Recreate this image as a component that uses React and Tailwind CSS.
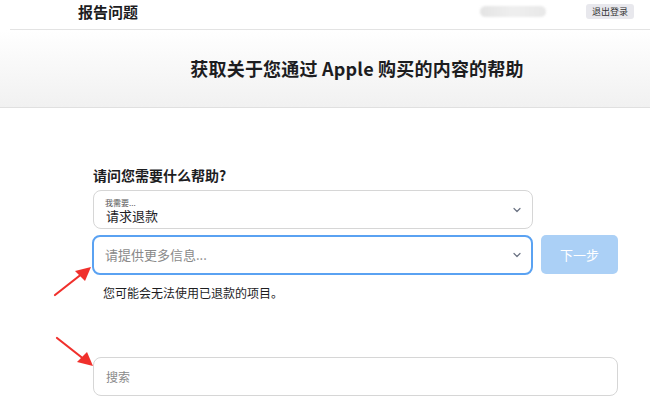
import React from "react";

function Chevron() {
  return (
    <svg className="w-[10px] h-[10px] text-gray-500" viewBox="0 0 10 10" fill="none" stroke="currentColor">
      <path d="M2 3.5 L5 6.5 L8 3.5" strokeWidth="1.2" strokeLinecap="round" strokeLinejoin="round" />
    </svg>
  );
}

export default function App() {
  return (
    <div
      className="relative w-[650px] h-[406px] overflow-hidden bg-white text-[#1d1d1f]"
      style={{ fontFamily: '"Noto Sans CJK SC", "Liberation Sans", sans-serif' }}
    >
      {/* Top bar */}
      <header className="ml-[10px] h-[30px] border-b border-[#e3e3e3] flex items-center pb-[7px] pl-[68px] pr-[16px]">
        <h1 className="text-[15px] font-bold leading-none">报告问题</h1>
        <div className="ml-auto flex items-center gap-[40px]">
          <div className="w-[66px] h-[11px] rounded-full bg-gradient-to-r from-[#e4e4e4] via-[#efefef] to-[#e8e8e8] blur-[1px]" />
          <button className="h-[15px] px-[6px] rounded-[3px] bg-[#e8e8ed] text-[9px] leading-none text-[#333]">退出登录</button>
        </div>
      </header>

      {/* Hero */}
      <section className="h-[78px] bg-gradient-to-b from-white to-[#f1f1f1] border-b border-[#e0e0e0] flex items-center justify-center">
        <h2 className="ml-[64px] text-[18px] font-bold tracking-[0.2px]">获取关于您通过 Apple 购买的内容的帮助</h2>
      </section>

      {/* Form */}
      <main className="pl-[93px] pr-[32px] pt-[60px]">
        <h3 className="text-[14px] font-bold leading-none mb-[8px]">请问您需要什么帮助?</h3>

        <div className="w-[440px] h-[39px] rounded-[8px] border border-[#d6d6d6] flex items-center pl-[11px] pr-[10px]">
          <div className="flex-1 flex flex-col pt-[2px]">
            <span className="text-[8px] leading-[9px] text-[#555]">我需要...</span>
            <span className="text-[13px] leading-[15px] mt-[1px] ml-[1px]">请求退款</span>
          </div>
          <Chevron />
        </div>

        <div className="mt-[6px] flex gap-[8px]">
          <div className="w-[441px] h-[40px] -ml-[1px] rounded-[8px] border-[2.5px] border-[#5aa2f2] flex items-center pl-[11px] pr-[9px]">
            <span className="flex-1 text-[13px] text-[#8a8a8a]">请提供更多信息...</span>
            <Chevron />
          </div>
          <button className="w-[77px] h-[39px] rounded-[5px] bg-[#abd0f6] text-white text-[13px]">下一步</button>
        </div>

        <p className="mt-[12px] ml-[10px] text-[12px] leading-none">您可能会无法使用已退款的项目。</p>

        <div className="mt-[58px] h-[39px] rounded-[8px] border border-[#d6d6d6] flex items-center pl-[12px]">
          <span className="text-[12px] text-[#8a8a8a]">搜索</span>
        </div>
      </main>

      {/* Annotation arrows */}
      <svg className="absolute left-[53px] top-[265px] w-[40px] h-[32px]" viewBox="0 0 40 32" fill="none">
        <line x1="2" y1="30" x2="30" y2="8" stroke="#f0302c" strokeWidth="2.2" strokeLinecap="round" />
        <polygon points="38,2 22,6 32,16" fill="#f0302c" />
      </svg>
      <svg className="absolute left-[55px] top-[336px] w-[40px] h-[32px]" viewBox="0 0 40 32" fill="none">
        <line x1="2" y1="2" x2="30" y2="24" stroke="#f0302c" strokeWidth="2.2" strokeLinecap="round" />
        <polygon points="38,30 22,26 32,16" fill="#f0302c" />
      </svg>
    </div>
  );
}
